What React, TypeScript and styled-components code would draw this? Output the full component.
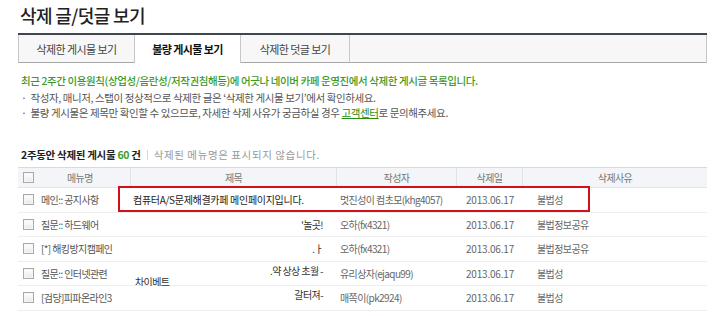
import React from 'react'
import styled, { createGlobalStyle, css } from 'styled-components'

// -------------------------------------------------------- //
//                           Data                           //
// -------------------------------------------------------- //

interface Post {
  menu: string,
  title: string,
  titleNote?: string,
  titleAlign: 'left' | 'right',
  raised?: boolean,
  author: string,
  date: string,
  reason: string
}

const posts: Post[] = [
  { menu: '메인:: 공지사항', title: '컴퓨터A/S문제해결카페 메인페이지입니다.', titleAlign: 'left', author: '멋진성이 컴초모(khg4057)', date: '2013.06.17', reason: '불법성' },
  { menu: '질문:: 하드웨어', title: "'놀곳!", titleAlign: 'right', author: '오하(fx4321)', date: '2013.06.17', reason: '불법정보공유' },
  { menu: '[*] 해킹방지캠페인', title: '.ㅏ', titleAlign: 'right', author: '오하(fx4321)', date: '2013.06.17', reason: '불법정보공유' },
  { menu: '질문:: 인터넷관련', title: '.약 상상 초월 -', titleNote: '차이베트', titleAlign: 'right', raised: true, author: '유리상자(ejaqu99)', date: '2013.06.17', reason: '불법성' },
  { menu: '[검당]피파온라인3', title: '갈터져-', titleAlign: 'right', raised: true, author: '매쪽이(pk2924)', date: '2013.06.17', reason: '불법성' },
  { menu: '질문에서팀', title: '', titleAlign: 'right', author: '유하(fx4321)', date: '2013.06.17', reason: '불법정보공유' }
]

const tabs = ['삭제한 게시물 보기', '불량 게시물 보기', '삭제한 덧글 보기']
const tabWidths = [117, 106, 109]

// -------------------------------------------------------- //
//                       Main Component                     //
// -------------------------------------------------------- //

const App = () => (
  <>
    <GlobalStyle />
    <Page>
      <Title>삭제 글/덧글 보기</Title>
      <TabBar>
        {tabs.map((t, i) => (
          <Tab key={t} active={i === 1} first={i === 0} w={tabWidths[i]}>{t}</Tab>
        ))}
        <TabFiller />
      </TabBar>

      <Notice>
        <GreenLine>최근 2주간 이용원칙(상업성/음란성/저작권침해등)에 어긋나 네이버 카페 운영진에서 삭제한 게시글 목록입니다.</GreenLine>
        <Bullet>작성자, 매니저, 스탭이 정상적으로 삭제한 글은 ‘삭제한 게시물 보기’에서 확인하세요.</Bullet>
        <Bullet>불량 게시물은 제목만 확인할 수 있으므로, 자세한 삭제 사유가 궁금하실 경우 <HelpLink>고객센터</HelpLink>로 문의해주세요.</Bullet>
      </Notice>

      <Count>
        <CountStrong>2주동안 삭제된 게시물 <Green>60</Green> 건</CountStrong>
        <Divider />
        <Muted>삭제된 메뉴명은 표시되지 않습니다.</Muted>
      </Count>

      <TableWrap>
        <HeadRow>
          <HeadMenuCell><CheckBox /><HeadLabel>메뉴명</HeadLabel></HeadMenuCell>
          <HeadCell>제목</HeadCell>
          <HeadCell>작성자</HeadCell>
          <HeadCell>삭제일</HeadCell>
          <HeadCell last>삭제사유</HeadCell>
        </HeadRow>
        {posts.map((p, i) => (
          <Row key={i}>
            <MenuCell><CheckBox />{p.menu}</MenuCell>
            <TitleCell align={p.titleAlign} strong={i === 0} raised={!!p.raised}>
              {p.title}
              {p.titleNote && <TitleNote>{p.titleNote}</TitleNote>}
            </TitleCell>
            <AuthorCell>{p.author}</AuthorCell>
            <DateCell>{p.date}</DateCell>
            <ReasonCell>{p.reason}</ReasonCell>
          </Row>
        ))}
        <Highlight />
      </TableWrap>
    </Page>
  </>
)

export default App

// -------------------------------------------------------- //
//                           Styles                         //
// -------------------------------------------------------- //

const GlobalStyle = createGlobalStyle`
  html, body {
    margin: 0;
    background: #fff;
    overflow: hidden;
  }
  body {
    font-family: "Noto Sans CJK KR", "Noto Sans", sans-serif;
    color: #555;
  }
`

const Page = styled.div`
  width: 689px;
  padding: 4px 0 0 18px;
`

const Title = styled.h1`
  margin: 0 0 0 2px;
  height: 29px;
  font-size: 18px;
  font-weight: 500;
  letter-spacing: -0.6px;
  color: #222;
  line-height: 22px;
`

const TabBar = styled.div`
  display: flex;
  border-top: 2px solid #3f4650;
  height: 28px;
`

const Tab = styled.div<{ active: boolean, first: boolean, w: number }>`
  width: ${p => p.w}px;
  box-sizing: border-box;
  display: flex;
  align-items: center;
  justify-content: center;
  font-size: 11px;
  letter-spacing: -0.6px;
  color: #444;
  background: #f7f7f7;
  border-right: 1px solid #c8c8c8;
  border-bottom: 1px solid #a8a8a8;
  ${p => p.first && css`border-left: 1px solid #c8c8c8;`}
  ${p => p.active && css`
    background: #fff;
    border-bottom: none;
    font-weight: 700;
    color: #111;
  `}
`

const TabFiller = styled.div`
  flex: 1;
  background: #f7f7f7;
  border-right: 1px solid #c8c8c8;
  border-bottom: 1px solid #a8a8a8;
`

const Notice = styled.div`
  padding: 10px 0 0 3px;
  font-size: 10.5px;
  letter-spacing: -0.4px;
  line-height: 15px;
`

const GreenLine = styled.div`
  color: #3c9a1f;
  font-weight: 500;
  margin-bottom: 2px;
`

const Bullet = styled.div`
  color: #555;
  &::before {
    content: '·';
    margin-right: 4px;
  }
`

const HelpLink = styled.span`
  color: #2c8a12;
  text-decoration: underline;
`

const Count = styled.div`
  display: flex;
  align-items: center;
  padding: 26px 0 0 3px;
  height: 17px;
  font-size: 10.5px;
`

const CountStrong = styled.strong`
  color: #222;
  font-weight: 700;
  letter-spacing: -0.3px;
`

const Green = styled.span`
  color: #3c9a1f;
`

const Divider = styled.span`
  width: 1px;
  height: 10px;
  background: #d6d6d6;
  margin: 0 6px;
`

const Muted = styled.span`
  color: #999;
  letter-spacing: 0.6px;
`

const TableWrap = styled.div`
  position: relative;
  margin-top: 4px;
  font-size: 10px;
  letter-spacing: -0.6px;
`

const columns = '113px 206px 120px 66px 184px'

const HeadRow = styled.div`
  display: grid;
  grid-template-columns: ${columns};
  height: 19px;
  background: #f3f5f8;
  border-top: 1px solid #d5dbe2;
  border-bottom: 1px solid #e2e6ea;
  color: #777;
`

const HeadCell = styled.div<{ last?: boolean }>`
  display: flex;
  align-items: center;
  justify-content: center;
  border-right: ${p => (p.last ? 'none' : '1px solid #e0e4e8')};
`

const HeadMenuCell = styled(HeadCell)`
  justify-content: flex-start;
  padding-left: 5px;
`

const HeadLabel = styled.span`
  margin-left: 26px;
`

const CheckBox = styled.span`
  display: inline-block;
  flex: none;
  width: 9px;
  height: 9px;
  border: 1px solid #a9a9a9;
  background: linear-gradient(#fff, #e9e9e9);
  box-shadow: inset 0 0 0 1px #f6f6f6;
  margin-right: 7px;
`

const Row = styled.div`
  display: grid;
  grid-template-columns: ${columns};
  height: 24.5px;
  box-sizing: border-box;
  border-bottom: 1px solid #eeeeee;
  color: #666;
  align-items: center;
`

const Cell = styled.div`
  white-space: nowrap;
  overflow: visible;
`

const MenuCell = styled(Cell)`
  display: flex;
  align-items: center;
  padding-left: 5px;
  color: #555;
`

const TitleCell = styled(Cell)<{ align: 'left' | 'right', strong: boolean, raised: boolean }>`
  position: relative;
  align-self: stretch;
  display: flex;
  align-items: ${p => (p.raised ? 'flex-start' : 'center')};
  justify-content: ${p => (p.align === 'right' ? 'flex-end' : 'flex-start')};
  padding: ${p => (p.align === 'right' ? '0 14px 0 0' : '0 0 0 2px')};
  padding-top: ${p => (p.raised ? '1px' : '0')};
  color: ${p => (p.strong ? '#222' : '#333')};
  letter-spacing: ${p => (p.strong ? '-0.3px' : '-0.6px')};
  background: #fff;
`

const TitleNote = styled.span`
  position: absolute;
  left: 4px;
  bottom: -4px;
  color: #333;
`

const AuthorCell = styled(Cell)`
  padding-left: 3px;
`

const DateCell = styled(Cell)`
  text-align: center;
  letter-spacing: -0.2px;
`

const ReasonCell = styled(Cell)`
  padding-left: 14px;
`

const Highlight = styled.div`
  position: absolute;
  left: 100px;
  top: 19px;
  width: 472px;
  height: 26px;
  box-sizing: border-box;
  border: 2px solid #d0111b;
  pointer-events: none;
`
